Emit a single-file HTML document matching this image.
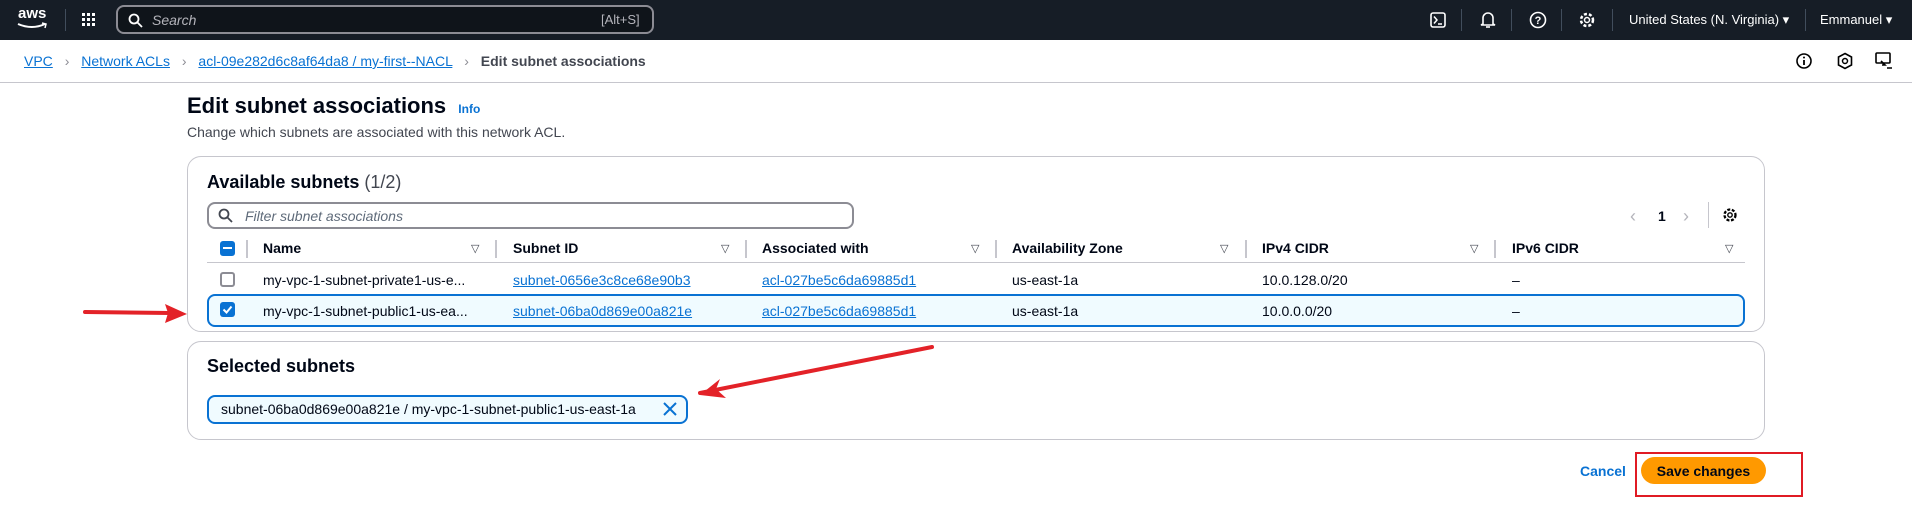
<!DOCTYPE html>
<html><head><meta charset="utf-8"><style>
*{box-sizing:border-box;margin:0;padding:0}
body{width:1912px;height:519px;background:#fff;font-family:"Liberation Sans",sans-serif;color:#000716;position:relative;overflow:hidden;font-size:14px}
.a{position:absolute;white-space:nowrap}
.nav{position:absolute;left:0;top:0;width:1912px;height:40px;background:#161d26}
.lnk{color:#0972d3;text-decoration:underline}
.vs{position:absolute;width:1px;height:22px;background:#414d5c;top:9px}
.panel{position:absolute;border:1px solid #c6c6cd;border-radius:14px;background:#fff}
.th{position:absolute;top:240px;font-weight:bold;font-size:14px;color:#000716}
.tri{position:absolute;top:242px;font-size:11px;color:#424650}
.sep{position:absolute;top:240px;width:2px;height:18px;background:#c6c6cd}
.cb{position:absolute;width:15px;height:15px;border-radius:3px}
</style></head><body>
<div class="nav">
  <div class="a" style="left:18px;top:5px;color:#fff;font-size:15px;font-weight:bold">aws</div>
  <svg class="a" style="left:17px;top:22px" width="32" height="8"><path d="M1 2 Q15 8 28 2" stroke="#fff" stroke-width="2" fill="none"/><path d="M25 1 L29 2 L28 6" stroke="#fff" stroke-width="1.5" fill="none"/></svg>
  <div class="vs" style="left:65px"></div>
  <svg class="a" style="left:82px;top:13px" width="14" height="14" fill="#fff"><rect x="0" y="0" width="3" height="3"/><rect x="5" y="0" width="3" height="3"/><rect x="10" y="0" width="3" height="3"/><rect x="0" y="5" width="3" height="3"/><rect x="5" y="5" width="3" height="3"/><rect x="10" y="5" width="3" height="3"/><rect x="0" y="10" width="3" height="3"/><rect x="5" y="10" width="3" height="3"/><rect x="10" y="10" width="3" height="3"/></svg>
  <div class="a" style="left:116px;top:5px;width:538px;height:29px;border:2px solid #8c8c94;border-radius:8px;background:#0f141a"></div>
  <svg class="a" style="left:128px;top:13px" width="15" height="15"><circle cx="6" cy="6" r="4.5" stroke="#fff" stroke-width="1.8" fill="none"/><path d="M9.5 9.5L14 14" stroke="#fff" stroke-width="1.8"/></svg>
  <div class="a" style="left:152px;top:12px;color:#b4b4bb;font-style:italic;font-size:14px">Search</div>
  <div class="a" style="left:601px;top:12px;color:#b4b4bb;font-size:13px">[Alt+S]</div>
  <svg class="a" style="left:1430px;top:12px" width="16" height="16"><rect x="1" y="1" width="14" height="14" rx="2" stroke="#fff" stroke-width="1.6" fill="none"/><path d="M4 4.5L7 8L4 11.5M8 12H12" stroke="#fff" stroke-width="1.5" fill="none"/></svg>
  <div class="vs" style="left:1461px"></div>
  <svg class="a" style="left:1480px;top:11px" width="16" height="18"><path d="M3 13V7a5 5 0 0110 0v6l2 1H1z" stroke="#fff" stroke-width="1.6" fill="none"/><path d="M6 16h4" stroke="#fff" stroke-width="1.6"/></svg>
  <div class="vs" style="left:1511px"></div>
  <svg class="a" style="left:1529px;top:11px" width="18" height="18"><circle cx="9" cy="9" r="7.5" stroke="#fff" stroke-width="1.6" fill="none"/><text x="9" y="13" font-size="11" font-weight="bold" fill="#fff" text-anchor="middle" font-family="Liberation Sans">?</text></svg>
  <div class="vs" style="left:1561px"></div>
  <svg class="a" style="left:1578px;top:11px" width="18" height="18"><circle cx="9" cy="9" r="6" stroke="#fff" stroke-width="2.5" stroke-dasharray="3 2" fill="none"/><circle cx="9" cy="9" r="2.5" stroke="#fff" stroke-width="1.5" fill="none"/></svg>
  <div class="vs" style="left:1612px"></div>
  <div class="a" style="left:1629px;top:12px;color:#fff;font-size:13px">United States (N. Virginia) ▾</div>
  <div class="vs" style="left:1805px"></div>
  <div class="a" style="left:1820px;top:12px;color:#fff;font-size:13px">Emmanuel ▾</div>
</div>
<div class="a" style="left:24px;top:53px;font-size:14px"><span class="lnk">VPC</span> <span style="color:#8c8c94;margin:0 8px">›</span> <span class="lnk">Network ACLs</span> <span style="color:#8c8c94;margin:0 8px">›</span> <span class="lnk">acl-09e282d6c8af64da8 / my-first--NACL</span> <span style="color:#8c8c94;margin:0 8px">›</span> <span style="color:#424650;font-weight:bold">Edit subnet associations</span></div>
<svg class="a" style="left:1795px;top:52px" width="18" height="18"><circle cx="9" cy="9" r="7" stroke="#000" stroke-width="1.6" fill="none"/><path d="M9 8v5" stroke="#000" stroke-width="1.8"/><circle cx="9" cy="5.5" r="1" fill="#000"/></svg>
<svg class="a" style="left:1836px;top:52px" width="18" height="18"><path d="M9 1.5L15.5 5v8L9 16.5 2.5 13V5z" stroke="#000" stroke-width="1.6" fill="none"/><circle cx="9" cy="9" r="2.5" stroke="#000" stroke-width="1.5" fill="none"/></svg>
<svg class="a" style="left:1875px;top:52px" width="18" height="18"><rect x="1" y="1" width="14" height="10" rx="1" stroke="#000" stroke-width="1.6" fill="none"/><path d="M6 9l4 4-3 0M12 16h5" stroke="#000" stroke-width="1.6" fill="none"/></svg>
<div class="a" style="left:0;top:82px;width:1912px;height:1px;background:#c6c6cd"></div>
<div class="a" style="left:187px;top:93px;font-size:22px;font-weight:bold">Edit subnet associations <span style="font-size:12px;color:#0972d3;margin-left:6px">Info</span></div>
<div class="a" style="left:187px;top:124px;font-size:14px;color:#424650">Change which subnets are associated with this network ACL.</div>

<div class="panel" style="left:187px;top:156px;width:1578px;height:176px"></div>
<div class="a" style="left:207px;top:172px;font-size:18px;font-weight:bold">Available subnets <span style="font-weight:normal;color:#424650">(1/2)</span></div>
<div class="a" style="left:207px;top:202px;width:647px;height:27px;border:2px solid #8c8c94;border-radius:8px"></div>
<svg class="a" style="left:218px;top:208px" width="15" height="15"><circle cx="6" cy="6" r="4.5" stroke="#424650" stroke-width="1.8" fill="none"/><path d="M9.5 9.5L14 14" stroke="#424650" stroke-width="1.8"/></svg>
<div class="a" style="left:245px;top:208px;font-style:italic;color:#5f6b7a;font-size:14px">Filter subnet associations</div>
<div class="a" style="left:1630px;top:206px;font-size:18px;color:#b4b4bb">‹</div>
<div class="a" style="left:1658px;top:208px;font-size:14px;font-weight:bold">1</div>
<div class="a" style="left:1683px;top:206px;font-size:18px;color:#b4b4bb">›</div>
<div class="a" style="left:1708px;top:202px;width:1px;height:26px;background:#c6c6cd"></div>
<svg class="a" style="left:1722px;top:207px" width="16" height="16"><circle cx="8" cy="8" r="5.5" stroke="#000" stroke-width="2.3" stroke-dasharray="3 1.6" fill="none"/><circle cx="8" cy="8" r="2.2" stroke="#000" stroke-width="1.4" fill="none"/></svg>

<div class="cb" style="left:220px;top:241px;background:#0972d3"><div style="position:absolute;left:3px;top:6px;width:9px;height:2px;background:#fff"></div></div>
<div class="sep" style="left:246px"></div>
<div class="th" style="left:263px">Name</div><div class="tri" style="left:471px">▽</div><div class="sep" style="left:495px"></div>
<div class="th" style="left:513px">Subnet ID</div><div class="tri" style="left:721px">▽</div><div class="sep" style="left:745px"></div>
<div class="th" style="left:762px">Associated with</div><div class="tri" style="left:971px">▽</div><div class="sep" style="left:995px"></div>
<div class="th" style="left:1012px">Availability Zone</div><div class="tri" style="left:1220px">▽</div><div class="sep" style="left:1245px"></div>
<div class="th" style="left:1262px">IPv4 CIDR</div><div class="tri" style="left:1470px">▽</div><div class="sep" style="left:1494px"></div>
<div class="th" style="left:1512px">IPv6 CIDR</div><div class="tri" style="left:1725px">▽</div>
<div class="a" style="left:207px;top:262px;width:1538px;height:1px;background:#c6c6cd"></div>

<div class="cb" style="left:220px;top:272px;border:2px solid #8c8c94"></div>
<div class="a" style="left:263px;top:272px">my-vpc-1-subnet-private1-us-e...</div>
<div class="a lnk" style="left:513px;top:272px">subnet-0656e3c8ce68e90b3</div>
<div class="a lnk" style="left:762px;top:272px">acl-027be5c6da69885d1</div>
<div class="a" style="left:1012px;top:272px">us-east-1a</div>
<div class="a" style="left:1262px;top:272px">10.0.128.0/20</div>
<div class="a" style="left:1512px;top:272px">–</div>

<div class="a" style="left:207px;top:294px;width:1538px;height:33px;border:2px solid #0972d3;border-radius:8px;background:#f0fbff"></div>
<div class="cb" style="left:220px;top:302px;background:#0972d3"><svg width="15" height="15"><path d="M3.5 7.5l3 3 5-6" stroke="#fff" stroke-width="2" fill="none"/></svg></div>
<div class="a" style="left:263px;top:303px">my-vpc-1-subnet-public1-us-ea...</div>
<div class="a lnk" style="left:513px;top:303px">subnet-06ba0d869e00a821e</div>
<div class="a lnk" style="left:762px;top:303px">acl-027be5c6da69885d1</div>
<div class="a" style="left:1012px;top:303px">us-east-1a</div>
<div class="a" style="left:1262px;top:303px">10.0.0.0/20</div>
<div class="a" style="left:1512px;top:303px">–</div>

<div class="panel" style="left:187px;top:341px;width:1578px;height:99px"></div>
<div class="a" style="left:207px;top:356px;font-size:18px;font-weight:bold">Selected subnets</div>
<div class="a" style="left:207px;top:395px;width:481px;height:29px;border:2px solid #0972d3;border-radius:8px;background:#f0fbff"></div>
<div class="a" style="left:221px;top:401px;font-size:14px">subnet-06ba0d869e00a821e / my-vpc-1-subnet-public1-us-east-1a</div>
<svg class="a" style="left:663px;top:402px" width="14" height="14"><path d="M1 1L13 13M13 1L1 13" stroke="#0972d3" stroke-width="2"/></svg>

<div class="a" style="left:1580px;top:463px;font-weight:bold;color:#0972d3;font-size:14px">Cancel</div>
<div class="a" style="left:1641px;top:457px;width:125px;height:27px;border-radius:14px;background:#ff9900"></div>
<div class="a" style="left:1641px;top:463px;width:125px;text-align:center;font-weight:bold;font-size:14px">Save changes</div>
<div class="a" style="left:1635px;top:452px;width:168px;height:45px;border:2px solid #e01b24"></div>

<svg class="a" style="left:0;top:0" width="1912" height="519">
<path d="M85 312L170 313" stroke="#e32228" stroke-width="4" stroke-linecap="round"/>
<path d="M187 314L165 304L168 313L165 323Z" fill="#e32228"/>
<path d="M932 347L700 393" stroke="#e32228" stroke-width="4" stroke-linecap="round"/>
<path d="M700 395L720 379L716 389L726 398Z" fill="#e32228"/>
</svg>
</body></html>
